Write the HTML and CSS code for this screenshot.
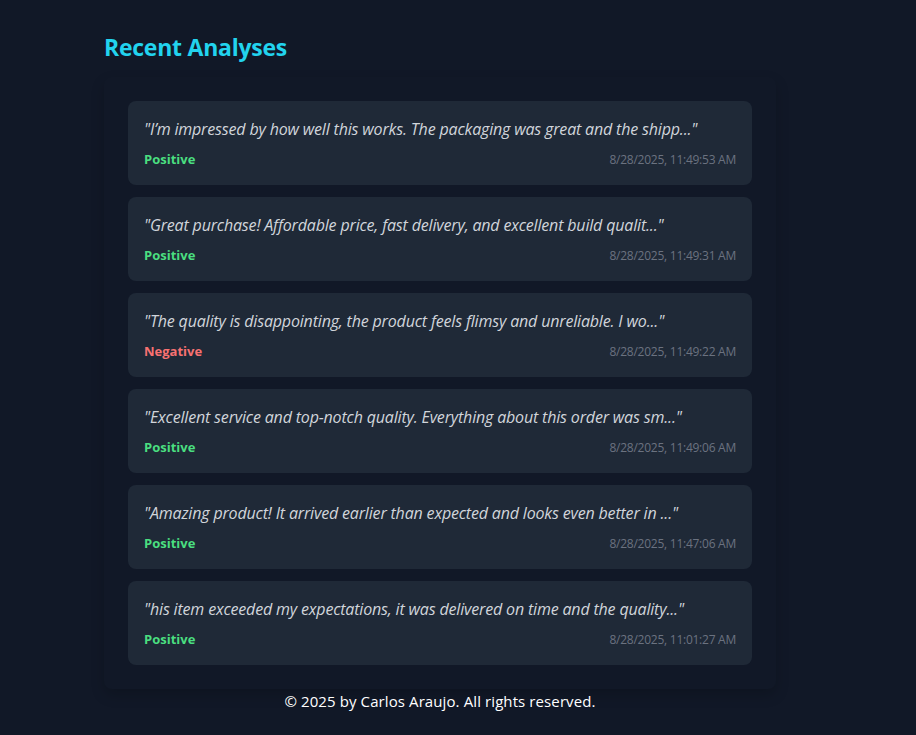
FILE: index.html
```html
<!DOCTYPE html>
<html lang="en">
<head>
<meta charset="utf-8">
<title>Recent Analyses</title>
<link rel="stylesheet" href="styles.css">
</head>
<body>
<div class="page">
  <h2 class="title">Recent Analyses</h2>
  <div class="panel">
    <div class="card">
      <p class="quote">"I’m impressed by how well this works. The packaging was great and the shipp..."</p>
      <div class="meta"><span class="sent pos">Positive</span><span class="date">8/28/2025, 11:49:53 AM</span></div>
    </div>
    <div class="card">
      <p class="quote">"Great purchase! Affordable price, fast delivery, and excellent build qualit..."</p>
      <div class="meta"><span class="sent pos">Positive</span><span class="date">8/28/2025, 11:49:31 AM</span></div>
    </div>
    <div class="card">
      <p class="quote">"The quality is disappointing, the product feels flimsy and unreliable. I wo..."</p>
      <div class="meta"><span class="sent neg">Negative</span><span class="date">8/28/2025, 11:49:22 AM</span></div>
    </div>
    <div class="card">
      <p class="quote">"Excellent service and top-notch quality. Everything about this order was sm..."</p>
      <div class="meta"><span class="sent pos">Positive</span><span class="date">8/28/2025, 11:49:06 AM</span></div>
    </div>
    <div class="card">
      <p class="quote">"Amazing product! It arrived earlier than expected and looks even better in ..."</p>
      <div class="meta"><span class="sent pos">Positive</span><span class="date">8/28/2025, 11:47:06 AM</span></div>
    </div>
    <div class="card">
      <p class="quote">"his item exceeded my expectations, it was delivered on time and the quality..."</p>
      <div class="meta"><span class="sent pos">Positive</span><span class="date">8/28/2025, 11:01:27 AM</span></div>
    </div>
  </div>
  <footer class="footer">© 2025 by Carlos Araujo. All rights reserved.</footer>
</div>
</body>
</html>
```
FILE: styles.css
```css
html, body {
  margin: 0;
  padding: 0;
  background: #111827;
  height: 100%;
}
body {
  font-family: "Open Sans", "Noto Sans", sans-serif;
  color: #ffffff;
}
.page {
  width: 672px;
  margin-left: 104px;
  padding-top: 31px;
}
.title {
  margin: 0 0 14px 0;
  font-size: 23px;
  line-height: 32px;
  font-weight: 700;
  color: #22d3ee;
  letter-spacing: -0.25px;
}
.panel {
  padding: 24px;
  display: flex;
  flex-direction: column;
  gap: 12px;
  box-shadow: 0 6px 14px rgba(0, 0, 0, 0.18);
  border-radius: 8px;
}
.card {
  background: #1f2937;
  border-radius: 8px;
  padding: 16px;
  display: flex;
  flex-direction: column;
  gap: 8px;
}
.quote {
  margin: 0;
  font-style: italic;
  font-size: 16px;
  line-height: 24px;
  color: #d1d5db;
  letter-spacing: -0.17px;
}
.meta {
  display: flex;
  justify-content: space-between;
  align-items: center;
  height: 20px;
}
.sent {
  font-size: 13px;
  font-weight: 700;
}
.pos { color: #4ade80; }
.neg { color: #f87171; }
.date {
  font-size: 12px;
  color: #6b7280;
  letter-spacing: -0.25px;
}
.footer {
  text-align: center;
  font-size: 15px;
  line-height: 24px;
  padding-top: 0;
  color: #ffffff;
  letter-spacing: 0.1px;
}
```
